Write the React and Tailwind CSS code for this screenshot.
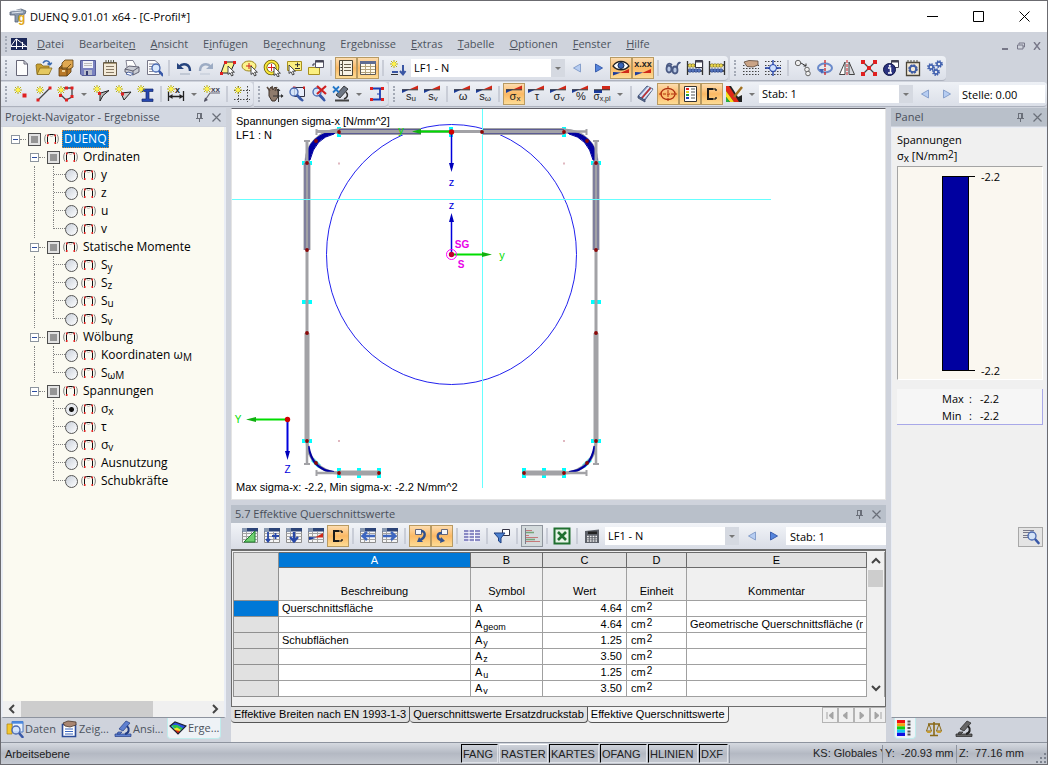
import React, { useState } from 'react';
import clsx from 'clsx';

// ---------- Icons (18 x 18) ----------

const Star = ({ x = 4, y = 4 }) => (
  <g transform={`translate(${x} ${y})`}>
    <path d="M0-4V4M-4 0H4M-3-3L3 3M-3 3L3-3" stroke="#b8ae10" strokeWidth="1" />
    <circle r="2" fill="#fff34a" />
  </g>
);

const Wedge = () => (
  <g>
    <path d="M1 8V4.5L9 4.2Z" fill="#1c3c9c" />
    <path d="M8 4.4L17 .5V4.6Z" fill="#d02818" />
    <path d="M1 4.8H17" stroke="#333" strokeWidth="1" />
  </g>
);

const Sym = ({ text, sub }) => (
  <g>
    <Wedge />
    <text x="10" y="15" textAnchor="middle" fontSize="11" fontFamily="Liberation Sans, sans-serif" fill="#222">
      {text}<tspan fontSize="8" dy="1">{sub}</tspan>
    </text>
  </g>
);

const Lens = ({ x = 10, y = 8 }) => (
  <g transform={`translate(${x} ${y})`}>
    <path d="M3 3L6.5 7" stroke="#3858a8" strokeWidth="2.6" strokeLinecap="round" />
    <circle r="4" fill="#cfe2fb" fillOpacity=".8" stroke="#4868b0" strokeWidth="1.3" />
  </g>
);

const Cursor = ({ x = 9, y = 7 }) => (
  <path transform={`translate(${x} ${y})`} d="M0 0V8.5L2 6.8L3.6 10L5.2 9.2L3.6 6.2H6.4Z" fill="#fff" stroke="#333" strokeWidth=".9" />
);

const Sheet = () => (
  <g>
    <path d="M1.5 1.5H16.5V15.5H1.5Z" fill="#f6f6f6" stroke="#8d8d8d" />
    <path d="M1.5 6.5H16.5M1.5 9.5H16.5M1.5 12.5H16.5M5.5 5V15M10.5 5V15" stroke="#a4a4a4" />
    <path d="M1 1H17V4.5H1Z" fill="#2c4478" />
    <path d="M1 1H6V4.5H1Z" fill="#8898b0" />
  </g>
);

const Abacus = () => (
  <g>
    <path d="M1.5 2V16M16.5 2V16M1 6H17M1 12H17" stroke="#333" strokeWidth="1.3" />
    {[4, 7, 10, 13].map(x => <circle key={x} cx={x} cy="6.5" r="1.8" fill="#f0dc50" stroke="#756a20" strokeWidth=".6" />)}
    {[4, 7, 10, 13].map(x => <circle key={x} cx={x} cy="11.5" r="1.8" fill="#5878c0" stroke="#203878" strokeWidth=".6" />)}
  </g>
);

const DotGrid = () => (
  <path d="M1 6.5H17M1 9.5H17M1 12.5H17M1 15.5H17" stroke="#444" strokeWidth="1.2" strokeDasharray="1.5 1.5" />
);

const ICONS = {
  new: <path d="M3.5 1.5H11L14.5 5V16.5H3.5ZM11 1.5V5H14.5" fill="#fdfdfd" stroke="#667" />,
  open: (
    <g>
      <path d="M1 6L2 5H6L8 7H14V15H2Z" fill="#c8a030" stroke="#856a1c" strokeWidth=".8" />
      <path d="M2 15.5L5 9H17L14 15.5Z" fill="#e4c860" stroke="#856a1c" strokeWidth=".8" />
      <path d="M8 4C10 1 14 1 15 5M15 6L12.5 4.5M15 6L16.8 3.6" fill="none" stroke="#3a6ab0" strokeWidth="1.5" />
    </g>
  ),
  archive: (
    <g stroke="#5a3c10" strokeWidth=".8">
      <path d="M2 9L6 5H14V13L10 17H2Z" fill="#b87828" />
      <path d="M5 4L8 1H16V8L13 10H5Z" fill="#e0a850" />
      <path d="M2 9H10V17M10 9L14 5" fill="none" />
      <path d="M5 12H8" stroke="#fff0c0" strokeWidth="1.5" />
    </g>
  ),
  save: (
    <g>
      <path d="M1.5 1.5H16.5V16.5H3L1.5 15Z" fill="#7a82c0" stroke="#555c98" />
      <path d="M4 2H14V9H4Z" fill="#f0f2f8" />
      <path d="M5 4.5H13M5 6.5H13" stroke="#bbb" />
      <path d="M5 11H13V16H5Z" fill="#b8bccc" />
      <path d="M7 12H9V16H7Z" fill="#333a70" />
    </g>
  ),
  clip: (
    <g>
      <path d="M2.5 3.5H15.5V16.5H2.5Z" fill="#f3ead8" stroke="#6b5d49" />
      <path d="M3 4.5H15" stroke="#a89878" />
      <path d="M5 1V4M7.5 1V4M10 1V4M12.5 1V4" stroke="#554" />
      <path d="M5 7.5H13M5 10.5H13M5 13.5H13" stroke="#887a66" />
    </g>
  ),
  print: (
    <g strokeWidth=".9">
      <path d="M4 8L3 1.5H10L13 7" fill="#fff" stroke="#778" />
      <path d="M2 10L6 7L16 8V13L10 16L2 13Z" fill="#c9ccd4" stroke="#556" />
      <path d="M2 10L10 12V16M10 12L16 8" fill="none" stroke="#556" />
      <path d="M5 13L10 14.5L8 16.5L3 15Z" fill="#fff" stroke="#445ca0" />
    </g>
  ),
  preview: (
    <g>
      <path d="M2.5 1.5H10L14.5 5.5V15.5H2.5Z" fill="#fdfdfd" stroke="#778" />
      <path d="M4 5H9M4 7.5H8M4 10H7M4 12.5H8" stroke="#889" />
      <Lens x={11} y={9} />
    </g>
  ),
  undo: (
    <g>
      <path d="M2 4V10H9Z" fill="#26447e" />
      <path d="M4 8C8 3 15 5 15 12" fill="none" stroke="#26447e" strokeWidth="2.4" />
      <path d="M5 15H15" stroke="#b4bccb" strokeWidth="1.4" />
    </g>
  ),
  redo: (
    <g>
      <path d="M16 4V10H9Z" fill="#9dacc4" />
      <path d="M14 8C10 3 3 5 3 12" fill="none" stroke="#9dacc4" strokeWidth="2.4" />
      <path d="M3 15H13" stroke="#c8cfdb" strokeWidth="1.4" />
    </g>
  ),
  selRhomb: (
    <g>
      <path d="M2 14L6 3H16L11 14Z" fill="#fbf48c" stroke="#222" />
      <path d="M1 13H4V16H1ZM5 2H8V5H5ZM14 2H17V5H14Z" fill="#e02020" />
      <Cursor x={9} y={7} />
    </g>
  ),
  selEllipse: (
    <g>
      <ellipse cx="8" cy="7" rx="7" ry="5" fill="#fbf48c" stroke="#a08820" />
      <path d="M8 4V10M5 7H11" stroke="#d02020" />
      <Cursor x={10} y={7} />
    </g>
  ),
  selRing: (
    <g>
      <circle cx="8.5" cy="8.5" r="6" fill="#fff" stroke="#665800" strokeWidth="3.6" />
      <circle cx="8.5" cy="8.5" r="6" fill="none" stroke="#fbe93c" strokeWidth="2" />
      <path d="M8.5 5V12M5 8.5H12" stroke="#e02020" />
      <Cursor x={11} y={8} />
    </g>
  ),
  selAdd: (
    <g>
      <path d="M2.5 2.5H16.5V11.5H2.5Z" fill="#fbf080" stroke="#a89020" />
      <path d="M12.5 3.5V8M10 5.7H15M10 9.5H15" stroke="#333" />
      <Cursor x={4} y={6} />
    </g>
  ),
  selWin: (
    <g>
      <path d="M1.5 8.5H12.5V15.5H1.5Z" fill="#fbf080" stroke="#a89020" />
      <path d="M8.5 1.5H16.5V8.5H8.5Z" fill="#fff" stroke="#556" />
      <path d="M8.5 2.5H16.5" stroke="#445" strokeWidth="2" />
      <path d="M6 7V5H8" fill="none" stroke="#334" />
    </g>
  ),
  listWin: (
    <g>
      <path d="M2.5 1.5H15.5V16.5H2.5Z" fill="#f7f3e6" stroke="#4d4636" />
      <path d="M7 5.5H14M7 8.5H14M7 11.5H14M5.5 2V16" stroke="#665d4a" />
      <path d="M3.5 5.5H5M3.5 8.5H5M3.5 11.5H5" stroke="#333" />
    </g>
  ),
  tableWin: (
    <g>
      <path d="M1.5 2.5H16.5V15.5H1.5Z" fill="#fffbee" stroke="#5d5a58" />
      <path d="M1 2H17V5H1Z" fill="#5f6c92" />
      <path d="M2 7.5H16M2 10.5H16M2 13.5H16M6.5 5V15M11.5 5V15" stroke="#b3a27c" />
    </g>
  ),
  newLoad: (
    <g>
      <Star x={5} y={5} />
      <path d="M3 13H9M14 6V15M11 12L14 15.5L16.5 12" fill="none" stroke="#3a56a4" strokeWidth="2" />
      <path d="M2 15.5H9" stroke="#333" />
    </g>
  ),
  prev: <path d="M12.5 5V13L5.5 9Z" fill="#b6cdf2" stroke="#87a0cc" />,
  next: <path d="M5.5 5V13L12.5 9Z" fill="#5585dd" stroke="#3b5fae" />,
  nextOff: <path d="M5.5 5V13L12.5 9Z" fill="#b6cdf2" stroke="#87a0cc" />,
  eye: (
    <g>
      <path d="M1 7C5 1 13 1 17 7C13 12 5 12 1 7Z" fill="#fff" stroke="#222" strokeWidth="1.3" />
      <circle cx="9" cy="6.5" r="3" fill="#3864b8" stroke="#14284e" />
      <path d="M1 16.5V13L9 13.5Z" fill="#1c3c9c" />
      <path d="M8 14L17 10V14Z" fill="#d02818" />
    </g>
  ),
  values: (
    <g>
      <text x="9" y="7.5" textAnchor="middle" fontSize="9" fontWeight="700" fontFamily="Liberation Sans, sans-serif" fill="#222">x.xx</text>
      <path d="M1 16.5V13L9 13.5Z" fill="#1c3c9c" />
      <path d="M8 14L17 10V14Z" fill="#d02818" />
    </g>
  ),
  glasses: (
    <g fill="#b8c8e4" stroke="#4a5a84" strokeWidth="1.8">
      <ellipse cx="5" cy="10" rx="2.5" ry="3.5" />
      <ellipse cx="11" cy="11" rx="2.5" ry="3.5" />
      <path d="M3 8C3 4 6 4 8 6M13 9C13 5 15 3 16.5 4" fill="none" />
    </g>
  ),
  abacus: <Abacus />,
  abacusWin: (
    <g>
      <Abacus />
      <path d="M9.5 1.5H16.5V8.5H9.5Z" fill="#fff" stroke="#334" />
      <path d="M9.5 2.5H16.5" stroke="#445" strokeWidth="2" />
    </g>
  ),
  gridHand: (
    <g>
      <DotGrid />
      <path d="M2 3L7 1.5L16 2V6L11 8L5 7.5Z" fill="#caa486" stroke="#5b4638" strokeWidth=".8" />
    </g>
  ),
  gridSnap: (
    <g>
      <path d="M1 2.5H17" stroke="#444" strokeWidth="1.2" strokeDasharray="1.5 1.5" />
      <DotGrid />
      <path d="M9 1V17M1 9H17" stroke="#1c3ca8" strokeWidth="1.3" />
      <circle cx="9" cy="9" r="3.5" fill="#cfe0ff" stroke="#1c3ca8" />
    </g>
  ),
  move: (
    <g fill="#eee" stroke="#666">
      <circle cx="4" cy="4" r="2.7" />
      <circle cx="13" cy="10.5" r="2.3" />
      <circle cx="14" cy="14.5" r="2.3" />
      <path d="M7 4L12 7M12 7V4.5M12 7H9.5" fill="none" stroke="#333" />
    </g>
  ),
  rotate: (
    <g>
      <ellipse cx="9" cy="9" rx="7" ry="4.5" fill="none" stroke="#6a8acb" strokeWidth="2" />
      <path d="M9 1V17" stroke="#d02020" strokeWidth="1.3" strokeDasharray="3 1" />
      <path d="M3 10L6 15L8 10Z" fill="#4565b5" />
    </g>
  ),
  mirror: (
    <g>
      <path d="M1.5 15.5L7 3V15.5Z" fill="#fff" stroke="#444" />
      <path d="M16.5 15.5L11 3V15.5Z" fill="#d9dbe0" stroke="#444" />
      <path d="M9 1V17" stroke="#d02020" strokeDasharray="3 1" />
    </g>
  ),
  nodes: (
    <g>
      <path d="M3 3L15 15M15 3L3 15" stroke="#444" strokeWidth="1.3" />
      <path d="M1 1H5V5H1ZM13 1H17V5H13ZM1 13H5V17H1ZM13 13H17V17H13ZM7 7H11V11H7Z" fill="#e02020" />
    </g>
  ),
  info: (
    <g>
      <path d="M9.5 1.5H16.5V8.5H9.5Z" fill="#fff" stroke="#445" />
      <path d="M9.5 2.5H16.5" stroke="#445" strokeWidth="2" />
      <circle cx="7.5" cy="10.5" r="6" fill="#2a3280" stroke="#101648" />
      <path d="M6 9H8.500V14M6 14H10" fill="none" stroke="#fff" strokeWidth="1.5" />
      <circle cx="7.800" cy="6.800" r="1.100" fill="#fff" />
    </g>
  ),
  gearClip: (
    <g>
      <path d="M2.5 3.5H15.5V16.5H2.5Z" fill="#f3ead8" stroke="#4b4539" strokeWidth="1.3" />
      <path d="M4 1V4M7 1V4M10 1V4M13 1V4" stroke="#554" />
      <circle cx="9" cy="10" r="3.6" fill="none" stroke="#3c5ba5" strokeWidth="2.4" strokeDasharray="2 .8" />
      <circle cx="9" cy="10" r="3" fill="none" stroke="#3c5ba5" strokeWidth="1.5" />
    </g>
  ),
  gears: (
    <g fill="none" stroke="#3f5fae">
      {[[5, 8], [13, 5], [10, 13]].map(([x, y]) => (
        <g key={x}>
          <circle cx={x} cy={y} r="2.8" strokeWidth="2.2" strokeDasharray="1.3 .9" />
          <circle cx={x} cy={y} r="2" strokeWidth="1.4" />
        </g>
      ))}
    </g>
  ),
  node: <g><Star x={5} y={5} /><path d="M9.5 8.5H13.5V12.5H9.5Z" fill="#e02020" /></g>,
  line: (
    <g>
      <Star x={5} y={5} />
      <path d="M3 15L15 3" stroke="#444" strokeWidth="1.3" />
      <path d="M1.5 13.5H4.5V16.5H1.5ZM13.5 1.5H16.5V4.5H13.5Z" fill="#e02020" />
    </g>
  ),
  polyline: (
    <g>
      <path d="M7 3H15V12L9 15L3 9" fill="none" stroke="#444" strokeWidth="1.3" />
      <Star x={4} y={5} />
      <path d="M8 1.5H11V4.5H8ZM13.5 1.5H16.5V4.5H13.5ZM13.5 10H16.5V13H13.5ZM8 13.5H11V16.5H8ZM2 9H5V12H2Z" fill="#e02020" />
    </g>
  ),
  elemA: (
    <g>
      <path d="M6 8.5L16 5.5L10 10.5L7 16V9Z" fill="#bbb" stroke="#222" />
      <Star x={4} y={4} />
      <path d="M5 7H8V10H5Z" fill="#e02020" />
    </g>
  ),
  elemB: (
    <g>
      <path d="M6 8L16 7L9 15Z" fill="#ccc" stroke="#222" />
      <Star x={4} y={4} />
      <path d="M6 7.5H9V10.5H6Z" fill="#e02020" />
    </g>
  ),
  beam: (
    <g>
      <path d="M5 4H16V6.500H12V14H16V16.500H5V14H9V6.500H5Z" fill="#2748b0" stroke="#16296c" strokeWidth=".7" />
      <Star x={4} y={4} />
    </g>
  ),
  dim: (
    <g>
      <path d="M1.5 6V16M16.5 6V16M2 11.5H16" stroke="#222" strokeWidth="1.3" />
      <path d="M2 11.5L5.5 9V14ZM16 11.5L12.5 9V14Z" fill="#222" />
      <Star x={4} y={4} />
      <text x="10.5" y="8" textAnchor="middle" fontSize="9" fontWeight="700" fontFamily="Liberation Sans, sans-serif" fill="#222">x</text>
    </g>
  ),
  comment: (
    <g>
      <path d="M1.5 16L7 8H17" fill="none" stroke="#667" strokeWidth="1.2" />
      <path d="M1 17L2 12.5L5 15Z" fill="#556" />
      <Star x={4} y={4} />
      <text x="12.5" y="6.5" textAnchor="middle" fontSize="8" fontWeight="700" fontFamily="Liberation Sans, sans-serif" fill="#445">xx</text>
    </g>
  ),
  rectDash: (
    <g>
      <path d="M5.5 1V17M14.5 1V17M1 5.5H17M1 14.5H17" stroke="#444" strokeDasharray="1.5 1.5" />
      <Star x={5} y={5} />
    </g>
  ),
  pan: (
    <g>
      <path d="M3 5L5 2L7 5L9 2L12 5V12L9 16H6L3 11Z" fill="#8f7b6c" stroke="#3d3129" />
      <path d="M1 2L4 6M6 1L7 5M11 2L9 6" stroke="#5a4b40" strokeWidth="1.5" />
      <path d="M12.5 5V17M7 11H17" stroke="#333" />
      <path d="M12.5 3.5L14.5 6H10.5ZM17.5 11L15 9V13Z" fill="#333" />
    </g>
  ),
  zoomWin: (
    <g>
      <path d="M6.5 2.5H16.5V11.5H6.5Z" fill="#e8eefb" stroke="#334" />
      <path d="M15 1.5H17V4H15ZM5 1.5H7.5V4H5Z" fill="#d02020" />
      <Lens x={6} y={7} />
      <path d="M9 10L15 16" stroke="#3858a8" strokeWidth="2.4" />
    </g>
  ),
  zoomAll: (
    <g>
      <Lens x={7} y={7} />
      <path d="M9 10L15 16" stroke="#3858a8" strokeWidth="2.4" />
      <path d="M7 1L16 9M16 1L7 9" stroke="#d02020" strokeWidth="2.2" />
    </g>
  ),
  viewX: (
    <g>
      <path d="M12 1L16 4L8 13L4 10Z" fill="#6d7683" stroke="#222" strokeWidth=".8" />
      <path d="M3 14.5H17V16.5H3Z" fill="#444" />
      <path d="M14 7C17 10 15 13 12 14" stroke="#333" strokeWidth="1.6" fill="none" />
      <path d="M1 1.5L7 7.500M7 1.5L1 7.500" stroke="#2478c8" strokeWidth="1.8" />
    </g>
  ),
  cross: (
    <g>
      <path d="M4 3.5H14M4 14.5H14M12 4V14" fill="none" stroke="#1c3cb0" strokeWidth="1.8" />
      <path d="M12 9H9" stroke="#1c3cb0" />
      <path d="M2 2H5V5H2ZM13 2H16V5H13ZM2 13H5V16H2ZM13 13H16V16H13Z" fill="#e02020" />
    </g>
  ),
  su: <Sym text="s" sub="u" />,
  sv: <Sym text="s" sub="v" />,
  om: <Sym text="ω" />,
  som: <Sym text="s" sub="ω" />,
  sx: <Sym text="σ" sub="x" />,
  tau: <Sym text="τ" />,
  sgv: <Sym text="σ" sub="v" />,
  pct: <Sym text="%" />,
  sxpl: (
    <g>
      <path d="M1 4.8H9V8H1Z" fill="#1c3c9c" />
      <path d="M9 1H17V4.8H9Z" fill="#d02818" />
      <path d="M1 4.8H17" stroke="#333" />
      <text x="9" y="15" textAnchor="middle" fontSize="10" fontFamily="Liberation Sans, sans-serif" fill="#222">
        σ<tspan fontSize="7" dy="1">x,pl</tspan>
      </text>
    </g>
  ),
  solid: (
    <g strokeWidth=".8">
      <path d="M1 11L10 1L16 4L8 15Z" fill="#8ba2cf" stroke="#3b4a6c" />
      <path d="M3 12L12 2M6 14L15 4" stroke="#e8eefa" strokeWidth="1.4" />
      <path d="M5 13L13.5 3" stroke="#c03030" strokeWidth="1.6" />
      <path d="M1 11L8 15V17L1 13Z" fill="#586a90" stroke="#3b4a6c" />
    </g>
  ),
  target: (
    <g fill="none" stroke="#b03010">
      <ellipse cx="9" cy="9" rx="7" ry="5.5" strokeWidth="1.3" />
      <path d="M9 1V17M0 9H18" strokeDasharray="3 1" />
    </g>
  ),
  legend: (
    <g>
      <path d="M3.5 1.5H15.5V16.5H3.5Z" fill="#fff" stroke="#333" />
      <path d="M5 4H8" stroke="#e02020" strokeWidth="2" />
      <path d="M5 7H8" stroke="#e8d020" strokeWidth="2" />
      <path d="M5 10H8" stroke="#20a040" strokeWidth="2" />
      <path d="M5 13H8" stroke="#2040c0" strokeWidth="2" />
      <path d="M10 4H14M10 7H14M10 10H14M10 13H14" stroke="#555" />
    </g>
  ),
  cprof: (
    <g fill="none" strokeWidth="2">
      <path d="M10 4H5V14H10" stroke="#1a1a1a" />
      <path d="M10 4H13M10 14H13" stroke="#7d6a4c" />
      <path d="M13 4V6M13 14V12" stroke="#1a1a1a" strokeWidth="1.4" />
    </g>
  ),
  colors: (
    <g>
      <path d="M1 1H17V17H1Z" fill="#222" />
      <path d="M1 1H4L14 17H9L1 6Z" fill="#e02818" />
      <path d="M1 6L9 17H5L1 12Z" fill="#f8e020" />
      <path d="M1 12L5 17H1Z" fill="#28b040" />
      <path d="M6 1H17V10L13 12Z" fill="#f0f0f0" />
      <path d="M17 2L9 12" stroke="#a07020" strokeWidth="2.4" />
    </g>
  ),
  tEdit: <g><Sheet /><path d="M3 15L14 4V15Z" fill="#70d070" stroke="#208030" /></g>,
  tInsert: <g><Sheet /><path d="M5 5V14M3 12L5 14.5L7 12M9 9H16M12.5 6V12" fill="none" stroke="#2848a8" strokeWidth="1.8" /></g>,
  tDown: <g><Sheet /><path d="M9 5V13M5 10L9 14.5L13 10" fill="none" stroke="#2848a8" strokeWidth="2.4" /></g>,
  tWedge: <g><Sheet /><path d="M2 13V10L10 10.5Z" fill="#1c3c9c" /><path d="M8 10.5L16 6V10.5Z" fill="#d02818" /></g>,
  tLeft: <g><Sheet /><path d="M16 9H4M8 5L3.5 9L8 13" fill="none" stroke="#3d66c0" strokeWidth="2.4" /></g>,
  tRight: <g><Sheet /><path d="M2 9H14M10 5L14.5 9L10 13" fill="none" stroke="#3d66c0" strokeWidth="2.4" /></g>,
  link1: (
    <g>
      <path d="M4.5 2.5H10.5V7.5H4.5Z" fill="#f4f6fb" stroke="#667" />
      <path d="M10 4C15 4 15 10 9.5 13" fill="none" stroke="#31518f" strokeWidth="2.4" />
      <path d="M6 15L8 10L12 15Z" fill="#31518f" />
    </g>
  ),
  link2: (
    <g>
      <path d="M8.5 2.5H14.5V7.5H8.5Z" fill="#f4f6fb" stroke="#667" />
      <path d="M9 6C3 6 4 12 8 13" fill="none" stroke="#31518f" strokeWidth="2.4" />
      <path d="M12 14L8 10L7 16Z" fill="#31518f" />
    </g>
  ),
  grid: <g><path d="M1 3H17V15H1Z" fill="#e4e4f4" /><path d="M1 4H17M1 7H17M1 10H17M1 13H17" stroke="#6c6cb4" strokeWidth="1.6" /><path d="M6 3V15M11.5 3V15" stroke="#fff" /></g>,
  filter: <g><path d="M9.5 2.5H16.5V8.5H9.5Z" fill="#fff" stroke="#334" /><path d="M1 6H12L8 11V16L5.5 14V11Z" fill="#4a80d0" stroke="#1f3f80" /></g>,
  bars: <g opacity=".7"><path d="M2.5 1V17" stroke="#556" /><path d="M3 3.5H9M3 8.5H6M3 10.5H15M3 14.5H17" stroke="#c05050" /><path d="M3 5.5H11M3 12.5H12" stroke="#509050" strokeWidth="1.4" /></g>,
  excel: <g><path d="M1.5 1.5H16.5V16.5H1.5Z" fill="#e8f4e8" stroke="#207030" strokeWidth="2" /><path d="M5 5L13 13M13 5L5 13" stroke="#207030" strokeWidth="2.6" /></g>,
  calc: <g><path d="M2 4L16 2.5V16H2Z" fill="#5c6068" /><path d="M5 4.5H14V7H5Z" fill="#222" /><path d="M4 9.5H14M4 11.8H14M4 14H14" stroke="#eee" strokeWidth="1.3" strokeDasharray="1.8 1" /></g>,
  daten: <g><path d="M6 1.5H17V12H6Z" fill="#e8f0fb" stroke="#4a78c0" /><path d="M6 2.5H17" stroke="#4a88e0" strokeWidth="2.4" /><path d="M1 4H6V14H1Z" fill="#f4c830" stroke="#a88010" strokeWidth=".7" /><Lens x={10} y={10} /></g>,
  zeigen: <g><path d="M2.5 4.5H15.5V16.5H2.5Z" fill="#fff" stroke="#2c4c98" strokeWidth="1.6" /><path d="M5 9H13M5 11.5H13M5 14H13" stroke="#3c68c0" /><path d="M3 3L8 1L16 2V5L10 7L5 6Z" fill="#a98672" stroke="#4b382c" strokeWidth=".8" /></g>,
  scope: <g fill="#5f80d0" stroke="#223c84" strokeWidth=".7"><path d="M12 1L16 3L9 11L5 9Z" /><path d="M1 14H17V16.5H1Z" /><path d="M4 12L8 12L6 14H3Z" /><path d="M13 6C16 9 15 13 11 14" fill="none" strokeWidth="2" /></g>,
  scopeDark: <g fill="#666" stroke="#222" strokeWidth=".7"><path d="M12 1L16 3L9 11L5 9Z" /><path d="M1 14H17V16.5H1Z" /><path d="M4 12L8 12L6 14H3Z" /><path d="M13 6C16 9 15 13 11 14" fill="none" strokeWidth="2" /></g>,
  result: (
    <g>
      <path d="M1 7L6 3L17 7L9 15Z" fill="#2ec8e8" />
      <path d="M1 7L6 3L17 7L14 9.5L8 6Z" fill="#2850e0" />
      <path d="M3 6L8 6L14 9.5L12 11L5 9Z" fill="#30c048" />
      <path d="M4 10L8 8.500L12 11L10 13L6 12Z" fill="#f4e428" />
      <path d="M5 11L11 12L9 15Z" fill="#e02818" />
      <path d="M1 7L6 3L17 7L9 15Z" fill="none" stroke="#223" strokeWidth="1.2" />
    </g>
  ),
  scale: (
    <g>
      <path d="M3 4H15M9 2V15M5 15.5H13" stroke="#8a6a18" strokeWidth="1.6" />
      <path d="M4 4L1.5 11H6.5ZM14 4L11.5 11H16.5Z" fill="none" stroke="#8a6a18" />
      <path d="M1 11H7L5.5 13H2.5ZM11 11H17L15.5 13H12.5Z" fill="#c49a30" />
    </g>
  ),
  legendTab: (
    <g>
      <path d="M1 1H9V4.2H1Z" fill="#f01010" />
      <path d="M1 4.2H9V7.4H1Z" fill="#f8a010" />
      <path d="M1 7.4H9V10.6H1Z" fill="#10d010" />
      <path d="M1 10.6H9V13.8H1Z" fill="#10c8f0" />
      <path d="M1 13.8H9V17H1Z" fill="#1010e0" />
      <path d="M11.5 2.5H14.5M11.5 5.5H14.5M11.5 9H14.5M11.5 12.5H14.5M11.5 15.5H14.5" stroke="#555" strokeWidth="1.8" />
    </g>
  ),
  find: <g><path d="M1 2.5H12M1 4.5H12M1 7.5H8M1 9.5H7" stroke="#778" /><Lens x={10} y={8} /></g>,
};

const Icon = ({ name }) => (
  <svg viewBox="0 0 18 18" className="size-[18px] shrink-0" fill="none" aria-hidden="true">{ICONS[name]}</svg>
);

const PinIcon = () => (
  <svg viewBox="0 0 9 9" className="size-[9px]" fill="none" stroke="#6a6f79" aria-hidden="true">
    <path d="M2.5 .5V5.5M6.5 .5V5.5M2 .5H7M1 5.5H8M4.5 5.5V9M5.5 1V5" />
  </svg>
);

const CloseIcon = () => (
  <svg viewBox="0 0 9 9" className="size-[9px]" fill="none" stroke="#6a6f79" aria-hidden="true">
    <path d="M.5 .5L8.5 8.5M8.5 .5L.5 8.5" strokeWidth="1.2" />
  </svg>
);

// ---------- Toolbars ----------

const Handle = () => <span className="mx-1 h-4 w-0 border-l-2 border-dotted border-[#a4aab6]" />;
const Sep = () => <span className="mx-[3px] h-4 w-0 border-l-2 border-[#c9cdd7]" />;

const ToolButton = ({ name, active, muted }) => (
  <button
    type="button"
    aria-label={name}
    className={clsx(
      'flex size-[22px] shrink-0 items-center justify-center border',
      active && 'border-[#b89a62] bg-linear-to-b from-[#fddcae] via-[#fbb964] to-[#fddc95]',
      muted && 'border-[#8f959d] bg-[#d3dadc]',
      !active && !muted && 'border-transparent'
    )}
  >
    <Icon name={name} />
  </button>
);

const Drop = () => (
  <button type="button" aria-label="Mehr" className="flex h-[22px] w-[14px] shrink-0 items-center justify-center">
    <span className="border-x-[3px] border-t-[3px] border-x-transparent border-t-[#777]" />
  </button>
);

const Combo = ({ label, value, width }) => (
  <div className={clsx('flex h-[18px] shrink-0 items-center bg-white', width)}>
    <select aria-label={label} className="h-full min-w-0 flex-1 appearance-none bg-white pl-[3px] text-[11px] leading-4 text-black">
      <option>{value}</option>
    </select>
    <span className="flex h-full w-[14px] items-center justify-center bg-[#d5d9e1]">
      <span className="border-x-[3px] border-t-[3px] border-x-transparent border-t-[#777]" />
    </span>
  </div>
);

// '|' separator, 'v' drop-down arrow, '*' pressed button, '~' pressed but disabled
const Tools = ({ items }) => items.split(' ').map((item, i) => {
  if (item === '|') return <Sep key={i} />;
  if (item === 'v') return <Drop key={i} />;
  return <ToolButton key={i} name={item.replace(/[*~]/, '')} active={item.endsWith('*')} muted={item.endsWith('~')} />;
});

const Strip = ({ children, className }) => (
  <div className={clsx('flex h-[25px] items-center rounded-r-sm border-b border-[#adb2be] bg-linear-to-b from-[#eef1f6] to-[#dbdfe8]', className)}>
    {children}
  </div>
);

const MENU = [
  ['', 'D', 'atei'], ['Bearbeite', 'n', ''], ['', 'A', 'nsicht'], ['E', 'i', 'nfügen'], ['Be', 'r', 'echnung'],
  ['Er', 'g', 'ebnisse'], ['', 'E', 'xtras'], ['', 'T', 'abelle'], ['', 'O', 'ptionen'], ['', 'F', 'enster'], ['', 'H', 'ilfe'],
];

const TitleBar = () => (
  <header className="flex h-[31px] items-center bg-white">
    <svg viewBox="0 0 18 18" className="ml-2 size-[18px]" aria-hidden="true">
      <path d="M1 4L12 1L17 3L16 6L10 7L9 14H6V7L1 7Z" fill="#8a98ac" stroke="#566378" strokeWidth=".8" />
      <path d="M1 3L12 2M3 5L14 4" stroke="#e2e8f0" />
      <text x="9" y="14" fontSize="12" fontWeight="700" fontFamily="Liberation Sans, sans-serif" fill="#e0a820">g</text>
    </svg>
    <h1 className="ml-[3px] flex-1 text-[11px] leading-4 text-black">DUENQ 9.01.01 x64 - [C-Profil*]</h1>
    <button type="button" aria-label="Minimieren" className="flex h-full w-[46px] items-center justify-center">
      <svg viewBox="0 0 11 11" className="size-[11px]"><path d="M0 5.5H11" stroke="#000" /></svg>
    </button>
    <button type="button" aria-label="Maximieren" className="flex h-full w-[46px] items-center justify-center">
      <svg viewBox="0 0 11 11" className="size-[11px]"><path d="M.5 .5H10.5V10.5H.5Z" fill="none" stroke="#000" /></svg>
    </button>
    <button type="button" aria-label="Schließen" className="flex h-full w-[46px] items-center justify-center">
      <svg viewBox="0 0 11 11" className="size-[11px]"><path d="M.5 .5L10.5 10.5M10.5 .5L.5 10.5" stroke="#000" /></svg>
    </button>
  </header>
);

const MenuBar = () => (
  <nav className="flex h-6 items-center text-[11px] leading-4 text-[#4d535e]">
    <Handle />
    <svg viewBox="0 0 16 12" className="h-3 w-4" aria-hidden="true">
      <path d="M0 0H16V12H0Z" fill="#1c2858" />
      <path d="M0 8.5H16M5.5 1V11M11.5 4V11M5 1L0 8M5.5 1L16 9" stroke="#fff" strokeWidth="1" fill="none" />
    </svg>
    <div className="ml-[3px] flex flex-1 gap-px">
      {MENU.map(([pre, key, post]) => (
        <button key={pre + key + post} type="button" className="px-[7px]">{pre}<u>{key}</u>{post}</button>
      ))}
    </div>
    <div className="flex items-center gap-2 pr-[6px] pt-1">
      <svg viewBox="0 0 8 8" className="size-2"><path d="M1 7H7" stroke="#778" strokeWidth="2" /></svg>
      <svg viewBox="0 0 8 8" className="size-2" fill="none" stroke="#778"><path d="M2 2.5V1H7.5V5H6M.5 3H6V7H.5Z" /></svg>
      <svg viewBox="0 0 8 8" className="size-2"><path d="M1 0L7 8M7 0L1 8" stroke="#778" strokeWidth="1.4" /></svg>
    </div>
  </nav>
);

// ---------- Projekt-Navigator ----------

const TREE = [
  { label: 'Ordinaten', items: [['y'], ['z'], ['u'], ['v']] },
  { label: 'Statische Momente', items: [['S', 'y'], ['S', 'z'], ['S', 'u'], ['S', 'v']] },
  { label: 'Wölbung', items: [['Koordinaten ω', 'M'], ['S', 'ωM']] },
  { label: 'Spannungen', items: [['σ', 'x'], ['τ'], ['σ', 'v'], ['Ausnutzung'], ['Schubkräfte']] },
];

const SectionIcon = () => (
  <svg viewBox="0 0 15 12" className="mx-[3px] h-3 w-[15px] shrink-0" fill="none" aria-hidden="true">
    <path d="M2 1.5C.2 4 .2 8 2 10.5M13 1.500C14.800 4 14.800 8 13 10.5" stroke="#777" strokeWidth=".9" />
    <path d="M3.5 10V3.5Q3.5 1.5 5.5 1.5H9.5Q11.5 1.5 11.5 3.500V10" stroke="#111" />
    <path d="M5.5 2.500Q7.5 4.500 9.5 2.500" stroke="#999" strokeWidth=".7" />
    <path d="M3 2.5H4.500M10.5 2.5H12M3 10H4.500M10.5 10H12" stroke="#e02020" strokeWidth="2" />
  </svg>
);

const Expander = () => (
  <button type="button" aria-label="Zuklappen" className="flex size-[9px] shrink-0 items-center justify-center border border-[#8c949e] bg-white">
    <span className="h-px w-[5px] bg-[#2c4ca0]" />
  </button>
);

const Dots = () => <span className="w-[6px] shrink-0 border-b border-dotted border-[#808080]" />;

const TreeCheck = ({ id }) => (
  <input
    id={id}
    type="checkbox"
    defaultChecked
    className="ml-[2px] size-[13px] shrink-0 appearance-none border border-[#4f4f4f] bg-[#959595] shadow-[inset_0_0_0_2px_#e3e3e3]"
  />
);

// vertical line of one level; it stops halfway at the last node
const Trunk = ({ last, arm }) => (
  <span className={clsx('ml-[9px] flex h-[18px] shrink-0 flex-col', arm ? 'w-[12px]' : 'w-[10px]', !last && 'border-l border-dotted border-[#808080]')}>
    {arm && <span className={clsx('h-[9px] border-b border-dotted border-[#808080]', last && 'border-l')} />}
  </span>
);

const Tree = () => {
  const [selected, setSelected] = useState('3-0');

  return (
    <ul className="flex-1 pt-[3px] text-[12px] leading-[18px] text-black">
      <li>
        <div className="flex h-[18px] items-center pl-2">
          <Expander /><Dots /><TreeCheck id="root" /><SectionIcon />
          <label htmlFor="root" className="border border-dotted border-[#e08830] bg-[#0078d7] px-px leading-4 text-white">DUENQ</label>
        </div>
        <ul>
          {TREE.map((group, g) => (
            <li key={group.label}>
              <div className="flex h-[18px] items-center pl-[27px]">
                <Expander /><Dots /><TreeCheck id={`g${g}`} /><SectionIcon />
                <label htmlFor={`g${g}`} className="pl-[2px]">{group.label}</label>
              </div>
              <ul>
                {group.items.map(([text, sub], i) => (
                  <li key={i} className="flex h-[18px] items-center pl-[22px]">
                    <Trunk last={g === TREE.length - 1} />
                    <Trunk last={i === group.items.length - 1} arm />
                    <input
                      id={`i${g}-${i}`}
                      type="radio"
                      name="result"
                      checked={selected === `${g}-${i}`}
                      onChange={() => setSelected(`${g}-${i}`)}
                      className="size-[13px] shrink-0 appearance-none rounded-full border border-[#555] bg-linear-to-br from-[#c9d0da] to-white checked:bg-[radial-gradient(circle,#111_0_2px,#e8ebf0_3px)]"
                    />
                    <SectionIcon />
                    <label htmlFor={`i${g}-${i}`} className="pl-[2px]">
                      {text}{sub && <span className="relative top-[2px] text-[10px]">{sub}</span>}
                    </label>
                  </li>
                ))}
              </ul>
            </li>
          ))}
        </ul>
      </li>
    </ul>
  );
};

const PaneHeader = ({ title, light }) => (
  <div className={clsx('flex h-[18px] shrink-0 items-center gap-2 pl-1 pr-[5px] text-[11px] leading-4 text-[#484e59]', light ? 'bg-[#d3d8e2]' : 'bg-[#b9c0ca]')}>
    <h2 className="flex-1">{title}</h2>
    <button type="button" aria-label="Anheften"><PinIcon /></button>
    <button type="button" aria-label="Fenster schließen"><CloseIcon /></button>
  </div>
);

const NAV_TABS = [['daten', 'Daten'], ['zeigen', 'Zeig...'], ['scope', 'Ansi...'], ['result', 'Erge...']];

const Chevron = ({ d }) => (
  <svg viewBox="0 0 10 10" className="size-[10px]" fill="none" stroke="#444" strokeWidth="2" aria-hidden="true"><path d={d} /></svg>
);

const Navigator = () => (
  <aside className="flex w-[225px] shrink-0 flex-col">
    <PaneHeader title="Projekt-Navigator - Ergebnisse" light />
    <div className="mt-px flex flex-1 flex-col border-x-2 border-b border-[#e9edf5] border-b-[#8d939e] bg-[#fbfaf1]">
      <Tree />
      <div className="flex h-4 items-center bg-[#f0f0f0]">
        <button type="button" aria-label="Nach links" className="flex w-[18px] justify-center"><Chevron d="M7 1L3 5L7 9" /></button>
        <span className="h-full w-[132px] bg-[#cdcdcd]" />
        <span className="flex-1" />
        <button type="button" aria-label="Nach rechts" className="flex w-[18px] justify-center"><Chevron d="M3 1L7 5L3 9" /></button>
      </div>
    </div>
    <div className="flex h-6 items-start pl-1 text-[11px] leading-[22px] text-[#4d535e]">
      {NAV_TABS.map(([icon, label]) => (
        <button
          key={label}
          type="button"
          className={clsx('flex h-[21px] w-[54px] items-center gap-px whitespace-nowrap pl-px', label === 'Erge...' && 'rounded-b border border-t-0 border-[#c0ecec] bg-[#eef2f6]')}
        >
          <Icon name={icon} /><span>{label}</span>
        </button>
      ))}
    </div>
  </aside>
);

// ---------- Querschnitt ----------

const CYAN_H = [[307, 163], [596, 163], [307, 302], [596, 302], [307, 441], [596, 441]];
const CYAN_V = [[339, 132], [451, 132], [564, 132], [339, 473], [359, 473], [379, 473], [524, 473], [544, 473], [564, 473]];
const CYAN_D = [[316, 141, 45], [587, 141, -45], [316, 463, -45], [587, 463, 45]];
const NODES = [
  [339, 132], [482, 132], [564, 132], [316, 141], [587, 141], [307, 163], [596, 163], [307, 250], [596, 250],
  [307, 333], [596, 333], [307, 441], [596, 441], [316, 463], [587, 463], [339, 473], [379, 473], [524, 473], [564, 473],
];

const CrossSection = () => (
  <svg viewBox="232 109 653 390" preserveAspectRatio="xMinYMin meet" className="h-[390px] w-full" fill="none" role="img" aria-label="Querschnitt C-Profil">
    <g fill="#0ff">
      {CYAN_H.map(([x, y]) => <path key={`${x}${y}`} d={`M${x - 5} ${y - 2}h10v4h-10z`} />)}
      {CYAN_V.map(([x, y]) => <path key={`${x}${y}`} d={`M${x - 2} ${y - 5}h4v10h-4z`} />)}
      {CYAN_D.map(([x, y, a]) => <path key={`${x}${y}`} transform={`rotate(${a} ${x} ${y})`} d={`M${x - 2} ${y - 5}h4v10h-4z`} />)}
    </g>

    <ellipse cx="451.5" cy="254.5" rx="125" ry="130" stroke="#2222ee" strokeWidth="1" />

    {/* Ecken */}
    <g stroke="#9a9aa2" strokeWidth="3">
      <path d="M307 163A32 31 0 0 1 339 131M564 131A32 31 0 0 1 596 163" strokeWidth="5" />
      <path d="M307 441A32 32 0 0 0 339 473M564 473A32 32 0 0 0 596 441" />
    </g>
    <path d="M306 160Q308 134 336 131L334 134Q315 138 310 160Z M597 160Q595 134 567 131L569 134Q588 138 593 160Z" fill="#0000a0" stroke="#0000a0" />
    <path d="M308.5 446Q312 470 334 472M594.5 446Q591 470 569 472" stroke="#0000a0" strokeWidth="2" />

    {/* wirksame Bereiche */}
    <g stroke="#a2a2a6">
      <path d="M339 131.5H421M482 131.5H564M307 163V250M596 163V250" strokeWidth="7" />
      <path d="M339 131.5H421M482 131.5H564M307 163V250M596 163V250" stroke="#5c5c94" strokeWidth="5" />
      <path d="M316 131.5H564M307 141V333M596 141V333" strokeWidth="3" />
      <path d="M307 333V441M596 333V441M339 473H379M524 473H564" strokeWidth="5" />
      <path d="M307 441V464M596 441V464M316 473H339M564 473H587" strokeWidth="2.5" />
      <path d="M564 131.5H587" strokeWidth="2.5" />
      <path d="M316.5 129V135M586.5 129V135M304 141H310M593 141H599M304 464H310M593 464H599M316.5 470V476M586.5 470V476" strokeWidth="2" />
    </g>

    <path d="M482.5 109V488M232 199.5H771" stroke="#6ff" />
    <path d="M338 163.5h2M563 163.5h2M338 441h2M563 441h2" stroke="#e0b8c0" strokeWidth="2" />
    {NODES.map(([x, y]) => <circle key={`${x}${y}`} cx={x} cy={y} r="1.9" fill="#8a0808" />)}

    {/* Achsen */}
    <g strokeWidth="1.5">
      <path d="M451.5 132V168M451.5 254V218" stroke="#0000dd" />
      <path d="M451.5 131.5H418M451.5 254.5H486" stroke="#00dd00" strokeWidth="2" />
      <path d="M287 419.5H252" stroke="#00dd00" strokeWidth="2" />
      <path d="M287.5 419V455" stroke="#0000dd" strokeWidth="2" />
    </g>
    <path d="M451.5 172L449 163H454ZM451.5 213L449 222H454ZM287.5 460L285 451H290Z" fill="#0000bb" />
    <path d="M412 131.5L421 129V134ZM492 254.5L482 252V257ZM246 419.5L256 417V422Z" fill="#10b010" />
    <circle cx="451.5" cy="254.5" r="5" stroke="#ff00ff" />
    <circle cx="451.5" cy="132" r="2.7" fill="#d00000" />
    <circle cx="451.5" cy="254.5" r="2.7" fill="#c00030" />
    <circle cx="287.5" cy="419.5" r="2.7" fill="#d00000" />
    <g fontFamily="Liberation Sans, sans-serif" fontSize="11" textAnchor="middle">
      <text x="451.5" y="186" fill="#0000dd">z</text>
      <text x="451.5" y="209" fill="#0000dd">z</text>
      <text x="287.5" y="473" fill="#0000dd" fontSize="10">Z</text>
      <g fill="#00dd00">
        <text x="401" y="134">y</text>
        <text x="502" y="259">y</text>
        <text x="238" y="423" fontSize="10">Y</text>
      </g>
      <g fill="#e800e8" fontWeight="700" fontSize="10">
        <text x="462" y="248">SG</text>
        <text x="461" y="268">S</text>
      </g>
    </g>
  </svg>
);

// ---------- Tabelle ----------

const ROWS = [
  ['Querschnittsfläche', '', '4.64', ''],
  ['', 'geom', '4.64', 'Geometrische Querschnittsfläche (nicht reduziert)'],
  ['Schubflächen', 'y', '1.25', ''],
  ['', 'z', '3.50', ''],
  ['', 'u', '1.25', ''],
  ['', 'v', '3.50', ''],
];

const HEADS = ['Beschreibung', 'Symbol', 'Wert', 'Einheit', 'Kommentar'];

const ResultTable = () => (
  <table className="w-full table-fixed border-collapse text-[11px] leading-[15px] text-black">
    <colgroup>
      <col className="w-[45px]" /><col className="w-[192px]" /><col className="w-[72px]" />
      <col className="w-[84px]" /><col className="w-[60px]" /><col />
    </colgroup>
    <thead>
      <tr className="h-[15px]">
        <th rowSpan={2} aria-label="Zeile" className="border border-[#909090] bg-[#e1e1e1]" />
        {'ABCDE'.split('').map(c => (
          <th key={c} className={clsx('border border-[#6a6a6a] font-normal leading-[14px]', c === 'A' ? 'bg-[#0078d7] text-white' : 'bg-[#e1e1e1]')}>{c}</th>
        ))}
      </tr>
      <tr className="h-[33px]">
        {HEADS.map(h => <th key={h} className="border border-[#a0a0a0] bg-[#f0f0f0] pb-px align-bottom font-normal">{h}</th>)}
      </tr>
    </thead>
    <tbody className="bg-white">
      {ROWS.map(([name, sub, value, note], i) => (
        <tr key={i} className="h-4">
          <th className={clsx('border border-[#909090]', i === 0 ? 'bg-[#0078d7]' : 'bg-[#e1e1e1]')} />
          <td className="border border-[#a0a0a0] px-[3px]">{name}</td>
          <td className="border border-[#a0a0a0] px-1">A{sub && <span className="relative top-[2px] ml-px text-[9px] leading-none">{sub}</span>}</td>
          <td className="border border-[#a0a0a0] px-1 text-right">{value}</td>
          <td className="border border-[#a0a0a0] px-1">cm<span className="relative -top-[2px] ml-px text-[10px] leading-none">2</span></td>
          <td className="overflow-hidden whitespace-nowrap border border-[#a0a0a0] px-[3px]"><div className="overflow-hidden">{note}</div></td>
        </tr>
      ))}
    </tbody>
  </table>
);

const SHEETS = ['Effektive Breiten nach EN 1993-1-3', 'Querschnittswerte Ersatzdruckstab', 'Effektive Querschnittswerte'];
const PAGER = [
  ['Erste', 'M2 1V8M8 1V8L4 4.5Z'], ['Zurück', 'M6 1V8L2 4.5Z'], ['Vor', 'M3 1V8L7 4.5Z'], ['Letzte', 'M2 1V8L6 4.5ZM8 1V8'],
];

const TablePane = () => (
  <section className="mt-[5px] flex flex-1 flex-col bg-[#f0f0f0]">
    <PaneHeader title="5.7 Effektive Querschnittswerte" />
    <div className="flex h-[26px] items-center bg-linear-to-b from-[#f2f4f8] to-[#d9dde6] pl-2">
      <Tools items="tEdit tInsert tDown tWedge cprof* | tLeft tRight | link1* link2* | grid | filter | bars~ | excel | calc" />
      <Combo label="Lastfall" value="LF1 - N" width="ml-[2px] w-[134px]" />
      <span className="ml-[2px] flex"><Tools items="prev next" /></span>
      <input aria-label="Stab" readOnly defaultValue="Stab: 1" className="ml-px h-[18px] min-w-0 flex-1 bg-white pl-1 text-[11px] text-black" />
    </div>
    <div className="flex border border-t-2 border-[#6c6c6c] bg-[#f0f0f0] pb-[9px] pl-px pt-px font-['Liberation_Sans',sans-serif]">
      <div className="min-w-0 flex-1"><ResultTable /></div>
      <div className="flex w-[18px] flex-col items-center border-r border-[#a0a0a0]">
        <button type="button" aria-label="Nach oben" className="flex h-[18px] items-center"><Chevron d="M1 7L5 3L9 7" /></button>
        <span className="h-[17px] w-[15px] bg-[#cdcdcd]" />
        <span className="flex-1" />
        <button type="button" aria-label="Nach unten" className="flex h-[18px] items-center"><Chevron d="M1 3L5 7L9 3" /></button>
      </div>
    </div>
    <div className="flex items-start font-['Liberation_Sans',sans-serif] text-[11px] leading-[15px] text-black">
      {SHEETS.map((s, i) => (
        <button
          key={s}
          type="button"
          className={clsx('h-4 whitespace-nowrap rounded-b border border-l-0 border-t-0 border-[#555] px-[3px]', i === 2 ? 'bg-[#f4f4f4]' : 'bg-[#e0e0e0]')}
        >
          {s}
        </button>
      ))}
      <div className="ml-auto flex">
        {PAGER.map(([label, d]) => (
          <button key={label} type="button" aria-label={label} className="flex h-4 w-4 items-center justify-center border border-[#b4b4b4]">
            <svg viewBox="0 0 10 9" className="h-[9px] w-[10px]" fill="#a4a4a4" stroke="#a4a4a4"><path d={d} /></svg>
          </button>
        ))}
      </div>
    </div>
  </section>
);

// ---------- Panel rechts ----------

const SidePanel = () => (
  <aside className="flex w-[156px] shrink-0 flex-col">
    <PaneHeader title="Panel" />
    <div className="mt-px flex flex-1 flex-col border border-[#e9edf5] border-b-[#8d939e] bg-[#f0f0f0] pl-[5px] pr-[3px] pt-1 text-[11px] leading-4 text-black">
      <h3>Spannungen</h3>
      <p>σ<span className="relative top-[2px] text-[10px]">x</span> [N/mm<span className="relative -top-[2px] text-[10px]">2</span>]</p>
      <div className="mt-[2px] flex h-[214px] border border-[#a4a4a4] border-b-white border-r-white bg-[#faf7f0] pl-11 pt-[9px]">
        <span className="h-[195px] w-[27px] border border-black bg-[#0000a0]" />
        <div className="flex h-[195px] flex-col justify-between">
          <div className="flex h-px items-center gap-[6px]"><span className="h-px w-[6px] bg-black" />-2.2</div>
          <div className="flex h-px items-center gap-[6px]"><span className="h-px w-[6px] bg-black" />-2.2</div>
        </div>
      </div>
      <dl className="mt-[9px] grid grid-cols-[27px_11px_1fr] border-b border-r border-[#a8a8e8] bg-[#f6f6f6] pl-[45px] pt-px leading-[17px]">
        <dt>Max</dt><dd>:</dd><dd>-2.2</dd>
        <dt>Min</dt><dd>:</dd><dd>-2.2</dd>
      </dl>
      <button type="button" aria-label="Suchen" className="mt-[102px] flex h-5 w-[25px] items-center justify-center self-end border border-[#a8a8a8] bg-[#e4e4e4]">
        <Icon name="find" />
      </button>
    </div>
    <div className="flex h-6 items-start pl-[3px]">
      <button type="button" aria-label="Farbskala" className="flex h-[21px] w-[22px] items-center justify-center rounded-b border border-t-0 border-[#c0ecec] bg-[#eef2f6]"><Icon name="legendTab" /></button>
      <button type="button" aria-label="Faktoren" className="flex h-[21px] w-[36px] items-center justify-center"><Icon name="scale" /></button>
      <button type="button" aria-label="Filter" className="flex h-[21px] w-[24px] items-center justify-center"><Icon name="scopeDark" /></button>
    </div>
  </aside>
);

// ---------- Statusleiste ----------

const TOGGLES = [
  ['FANG', 'w-[37px]'], ['RASTER', 'w-[49px]'], ['KARTES', 'w-[50px]'], ['OFANG', 'w-[47px]'], ['HLINIEN', 'w-[50px]'], ['DXF', 'w-[29px]'],
];

const StatusBar = () => (
  <footer className="flex h-[22px] items-center border-t border-[#8d939e] bg-linear-to-b from-[#d5d9e0] via-[#b4b9c3] to-[#c6cad2] font-['Liberation_Sans',sans-serif] text-[11px] leading-4 text-[#222]">
    <span className="min-w-0 flex-1 pl-1">Arbeitsebene</span>
    <div className="flex gap-px">
      {TOGGLES.map(([t, w]) => (
        <button
          key={t}
          type="button"
          className={clsx('h-[19px] whitespace-nowrap border pl-px text-left', w, t === 'RASTER' ? 'border-[#dfe2e8] border-t-white' : 'border-[#dfe2e8] border-l-black border-t-black')}
        >
          {t}
        </button>
      ))}
    </div>
    <span className="ml-px h-[18px] w-[153px] overflow-hidden whitespace-nowrap border-l border-[#8d939e] pl-[83px]">KS: Globales Y</span>
    <span className="h-[18px] w-[74px] whitespace-pre border-l border-[#8d939e] pl-[2px]">Y:  -20.93 mm</span>
    <span className="h-[18px] w-[79px] whitespace-pre border-l border-[#8d939e] pl-[2px]">Z:  77.16 mm</span>
    <svg viewBox="0 0 12 12" className="size-3 self-end" fill="#7d838f" aria-hidden="true">
      <path d="M9 1h2v2h-2zM5 5h2v2h-2zM9 5h2v2h-2zM1 9h2v2h-2zM5 9h2v2h-2zM9 9h2v2h-2z" />
    </svg>
  </footer>
);

export default function App() {
  return (
    <div className="flex min-h-screen flex-col border border-[#6b6b70] bg-[#cfd3dc] font-['Open_Sans','Noto_Sans',sans-serif]">
      <TitleBar />
      <MenuBar />
      <div className="flex">
        <Strip>
          <Handle />
          <Tools items="new open archive save clip print preview | undo redo selRhomb selEllipse selRing selAdd selWin | listWin* tableWin* | newLoad" />
          <Combo label="Lastfall wählen" value="LF1 - N" width="ml-[2px] mr-px w-[154px]" />
          <Tools items="prev next eye* values* | glasses abacusWin abacus" />
        </Strip>
        <Strip className="ml-[2px]">
          <Handle />
          <Tools items="gridHand gridSnap | move rotate mirror nodes info gearClip gears" />
        </Strip>
      </div>
      <div className="mt-px flex">
        <Strip>
          <Handle />
          <Tools items="node line polyline v elemA elemB beam | dim v comment | rectDash" />
        </Strip>
        <Strip className="ml-px">
          <Handle />
          <Tools items="pan zoomWin zoomAll viewX v cross" />
        </Strip>
        <Strip className="ml-px min-w-0 flex-1 pr-[2px]">
          <Handle />
          <Tools items="su sv | om som | sx* tau sgv pct sxpl v | solid target* legend* cprof* colors v" />
          <Combo label="Stab wählen" value="Stab: 1" width="w-[154px]" />
          <span className="mx-px flex"><Tools items="prev nextOff" /></span>
          <input aria-label="Stelle" readOnly defaultValue="Stelle: 0.00" className="h-[18px] min-w-0 flex-1 bg-white pl-[3px] text-[11px] text-black" />
        </Strip>
      </div>
      <main className="mt-px flex flex-1 gap-[5px]">
        <Navigator />
        <div className="flex min-w-0 flex-1 flex-col">
          <div className="relative border border-[#e4e4e4] border-t-[#606068] bg-white text-black">
            <CrossSection />
            <p className="absolute left-1 top-[5px] font-['Liberation_Sans',sans-serif] text-[11px] leading-[14px]">
              Spannungen sigma-x [N/mm^2]<br />LF1 : N
            </p>
            <p className="absolute bottom-[5px] left-1 font-['Liberation_Sans',sans-serif] text-[11px] leading-[14px]">
              Max sigma-x: -2.2, Min sigma-x: -2.2 N/mm^2
            </p>
          </div>
          <TablePane />
        </div>
        <SidePanel />
      </main>
      <StatusBar />
    </div>
  );
}
